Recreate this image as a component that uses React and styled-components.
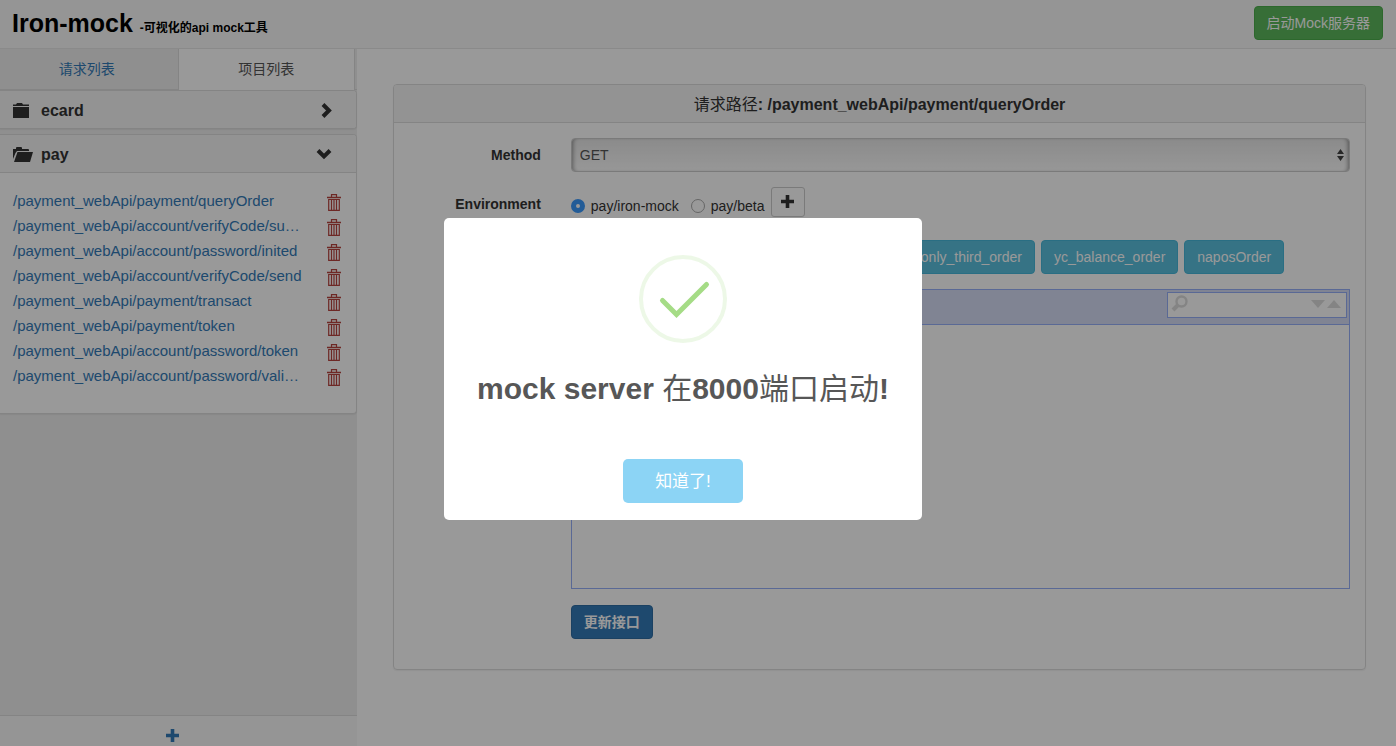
import React from "react";
import styled, { createGlobalStyle } from "styled-components";

const GlobalStyle = createGlobalStyle`
  *, *::before, *::after { box-sizing: border-box; }
  body {
    margin: 0;
    background: #fff;
    color: #333;
    font: 14px/20px "Liberation Sans", "Noto Sans CJK SC", sans-serif;
  }
  h1, h2, ul { margin: 0; padding: 0; font-weight: 700; }
  button, input, select { font: inherit; margin: 0; }
  a { color: #337ab7; text-decoration: none; }
  svg { display: block; }
`;

const Page = styled.div`
  display: flex;
  flex-direction: column;
  min-height: 100vh;
`;

const Header = styled.header`
  display: flex;
  align-items: center;
  justify-content: space-between;
  height: 49px;
  padding: 0 13px 2px 12px;
  background: #f8f8f8;
  border-bottom: 1px solid #e7e7e7;
`;

const Brand = styled.h1`
  padding-top: 4px;
  color: #000;
  font-size: 25px;
  line-height: 28px;
`;

const Tagline = styled.small`
  font-size: 12px;
`;

const colours = {
  success: ["#5cb85c", "#4cae4c"],
  info: ["#5bc0de", "#46b8da"],
  primary: ["#337ab7", "#2e6da4"],
};

const Button = styled.button`
  height: 34px;
  padding: 0 12px;
  border: 1px solid ${(p) => colours[p.$kind][1]};
  border-radius: 4px;
  background: ${(p) => colours[p.$kind][0]};
  color: #fff;
  font-weight: ${(p) => (p.$strong ? 700 : 400)};
  white-space: nowrap;
`;

const Columns = styled.div`
  display: flex;
  flex: 1;
`;

const Sidebar = styled.aside`
  display: flex;
  flex-direction: column;
  flex: 0 0 357px;
  background: #eee;
`;

const Tabs = styled.nav`
  display: grid;
  grid-template-columns: 1fr 1fr;
  height: 41px;
  padding-right: 2px;
  border-bottom: 1px solid #ddd;
`;

const Tab = styled.a`
  padding: ${(p) => (p.$active ? "10px 0 0" : "10px 4px 0 0")};
  margin-bottom: ${(p) => (p.$active ? "-1px" : "0")};
  text-align: center;
  color: ${(p) => (p.$active ? "#555" : "#337ab7")};
  background: ${(p) => (p.$active ? "#fff" : "#eee")};
  border: solid #ddd;
  border-width: ${(p) => (p.$active ? "0 1px" : "0")};
`;

const Project = styled.section`
  margin-bottom: 5px;
  background: #fff;
  border: solid #ddd;
  border-width: 1px 1px 1px 0;
  border-radius: 0 4px 4px 0;
  box-shadow: 0 1px 1px rgba(0, 0, 0, 0.05);
  overflow: hidden;
`;

const ProjectHeading = styled.h2`
  display: flex;
  align-items: center;
  height: ${(p) => (p.$open ? "38px" : "37px")};
  padding: 2px 24px 0 13px;
  background: #f5f5f5;
  font-size: 16px;
  line-height: 20px;
  border-bottom: ${(p) => (p.$open ? "1px solid #ddd" : "0")};
`;

const ProjectName = styled.span`
  flex: 1;
  padding-left: 8px;
`;

const RequestList = styled.ul`
  padding: 15px 12px 25px 13px;
  list-style: none;
`;

const Request = styled.li`
  display: flex;
  align-items: center;
  justify-content: space-between;
  height: 25px;
  font-size: 15px;
  font-weight: 400;
`;

const IconButton = styled.button`
  display: flex;
  padding: 4px 3px 0;
  border: 0;
  background: none;
  color: #b8433f;
`;

const AddProject = styled.button`
  display: flex;
  justify-content: center;
  height: 31px;
  margin-top: auto;
  padding: 13px 13px 0 0;
  border: 0;
  border-top: 1px solid #ddd;
  background: #f8f8f8;
  color: #337ab7;
`;

const Main = styled.main`
  flex: 1;
  min-width: 0;
  padding: 35px 30px 35px 36px;
`;

const Panel = styled.section`
  border: 1px solid #ddd;
  border-radius: 4px;
  box-shadow: 0 1px 1px rgba(0, 0, 0, 0.05);
`;

const PanelHeading = styled.h2`
  padding: 10px 15px 7px;
  border-bottom: 1px solid #ddd;
  border-radius: 3px 3px 0 0;
  background: #f5f5f5;
  font-size: 16px;
  line-height: 20px;
  text-align: center;
`;

const Plain = styled.span`
  font-weight: 400;
`;

const Form = styled.form`
  display: flex;
  flex-direction: column;
  gap: 15px;
  padding: 15px 0 30px;
`;

const Row = styled.div`
  display: grid;
  grid-template-columns: 2fr 10fr;
`;

const RowLabel = styled.label`
  padding: 7px 15px 0;
  font-weight: 700;
  text-align: right;
`;

const Field = styled.div`
  position: relative;
  grid-column: 2;
  min-width: 0;
  padding: 0 15px;
`;

const Select = styled.select`
  display: block;
  width: 100%;
  height: 34px;
  padding: 0 8px;
  appearance: none;
  border: 1px solid #ccc;
  border-radius: 4px;
  background: linear-gradient(#e8e8e8, #fcfcfc);
  box-shadow: inset 4px 0 4px -3px rgba(0, 0, 0, 0.4), inset -4px 0 4px -3px rgba(0, 0, 0, 0.4);
  color: #555;
`;

const SelectArrows = styled.svg`
  position: absolute;
  top: 11px;
  right: 21px;
  pointer-events: none;
`;

const Choices = styled.div`
  display: flex;
  align-items: flex-start;
  height: 38px;
`;

const Choice = styled.label`
  display: flex;
  align-items: center;
  gap: 6px;
  margin-right: ${(p) => (p.$last ? "7px" : "12px")};
  padding-top: 9px;
`;

const Radio = styled.input`
  width: 14px;
  height: 14px;
  appearance: none;
  border: 1px solid #aaa;
  border-radius: 50%;
  background: #fff;
  &:checked {
    border: 5px solid #3b99fc;
  }
`;

const AddButton = styled.button`
  display: flex;
  align-items: center;
  justify-content: center;
  width: 34px;
  height: 30px;
  padding: 0 2px 2px 0;
  border: 1px solid #ccc;
  border-radius: 3px;
  background: #fff;
  color: #333;
`;

const Presets = styled.div`
  display: flex;
  gap: 6px;
  padding-left: 337px;
`;

const Editor = styled.div`
  display: flex;
  flex-direction: column;
  height: 300px;
  margin-bottom: 1px;
  border: 1px solid #97b0f8;
  background: #fff;
`;

const EditorMenu = styled.div`
  display: flex;
  justify-content: flex-end;
  height: 35px;
  padding: 2px;
  border-bottom: 1px solid #97b0f8;
  background: #d5ddf6;
`;

const Search = styled.label`
  display: flex;
  width: 180px;
  height: 26px;
  padding: 2px 5px 4px 3px;
  border: 1px solid #97b0f8;
  background: #fff;
  color: #ddd;
`;

const SearchInput = styled.input`
  flex: 1;
  min-width: 0;
  border: 0;
  padding: 0 4px;
  background: none;
  outline: 0;
`;

const Backdrop = styled.div`
  position: fixed;
  inset: 0;
  display: flex;
  align-items: center;
  justify-content: center;
  padding: 0 30px 8px 0;
  background: rgba(0, 0, 0, 0.4);
`;

const Dialog = styled.div`
  display: flex;
  flex-direction: column;
  align-items: center;
  width: 478px;
  padding: 37px 17px 17px;
  border-radius: 5px;
  background: #fff;
`;

const DialogTitle = styled.h2`
  margin: 25px 0 50px;
  color: #575757;
  font-size: 30px;
  line-height: 41px;
  white-space: nowrap;
`;

const DialogButton = styled.button`
  height: 44px;
  padding: 2px 32px 0;
  border: 0;
  border-radius: 5px;
  background: #8cd4f5;
  color: #fff;
  font-size: 17px;
`;

const FolderIcon = ({ open }) => (
  <svg width="20" height="16" viewBox="0 0 20 16" fill="currentColor" aria-hidden="true">
    {open ? (
      <>
        <path d="M0 12V2h3V1q0-1 1-1h4q1 0 1 1v1h6q1 0 1 1v1H4L2.500 6z" />
        <path d="M1 15 4.500 5H20l-3 10z" />
      </>
    ) : (
      <>
        <path d="M0 3V1.500h3L4 0h5l1 1.500h6V3z" />
        <path d="M0 4h16v11H0z" />
      </>
    )}
  </svg>
);

const ChevronIcon = ({ down }) => (
  <svg width={down ? 16 : 12} height="16" viewBox={down ? "0 0 16 16" : "0 0 12 16"} fill="none" stroke="currentColor" strokeWidth="4" aria-hidden="true">
    <path d={down ? "M2 3.500 8 9.500 14 3.500" : "M3 1.500 9 7.500 3 13.500"} />
  </svg>
);

const TrashIcon = () => (
  <svg width="14" height="17" viewBox="0 0 14 17" fill="none" stroke="currentColor" aria-hidden="true">
    <path d="M0 3.500h14" strokeWidth="1.500" />
    <path d="M4.500 3V.700h5V3M1.700 5v11.300h10.600V5M1.700 5.500h10.600M4.500 6v10M7 6v10M9.500 6v10" strokeWidth="1.200" />
  </svg>
);

const PlusIcon = () => (
  <svg width="13" height="13" viewBox="0 0 13 13" fill="currentColor" aria-hidden="true">
    <path d="M4.700 0h3.600v4.700H13v3.600H8.300V13H4.700V8.300H0V4.700h4.700z" />
  </svg>
);

const requests = [
  "/payment_webApi/payment/queryOrder",
  "/payment_webApi/account/verifyCode/su…",
  "/payment_webApi/account/password/inited",
  "/payment_webApi/account/verifyCode/send",
  "/payment_webApi/payment/transact",
  "/payment_webApi/payment/token",
  "/payment_webApi/account/password/token",
  "/payment_webApi/account/password/vali…",
];

const presets = ["only_third_order", "yc_balance_order", "naposOrder"];

export default function App() {
  return (
    <Page>
      <GlobalStyle />
      <Header>
        <Brand>
          Iron-mock <Tagline>-可视化的api mock工具</Tagline>
        </Brand>
        <Button $kind="success">启动Mock服务器</Button>
      </Header>
      <Columns>
        <Sidebar>
          <Tabs>
            <Tab href="#requests">请求列表</Tab>
            <Tab href="#projects" $active>项目列表</Tab>
          </Tabs>
          <Project>
            <ProjectHeading>
              <FolderIcon />
              <ProjectName>ecard</ProjectName>
              <ChevronIcon />
            </ProjectHeading>
          </Project>
          <Project>
            <ProjectHeading $open>
              <FolderIcon open />
              <ProjectName>pay</ProjectName>
              <ChevronIcon down />
            </ProjectHeading>
            <RequestList>
              {requests.map((path) => (
                <Request key={path}>
                  <a href="#request">{path}</a>
                  <IconButton aria-label="Delete">
                    <TrashIcon />
                  </IconButton>
                </Request>
              ))}
            </RequestList>
          </Project>
          <AddProject aria-label="Add project">
            <PlusIcon />
          </AddProject>
        </Sidebar>
        <Main>
          <Panel>
            <PanelHeading>
              <Plain>请求路径</Plain>: /payment_webApi/payment/queryOrder
            </PanelHeading>
            <Form onSubmit={(e) => e.preventDefault()}>
              <Row>
                <RowLabel htmlFor="method">Method</RowLabel>
                <Field>
                  <Select id="method" defaultValue="GET">
                    <option>GET</option>
                  </Select>
                  <SelectArrows width="7" height="12" viewBox="0 0 7 12" fill="#444" aria-hidden="true">
                    <path d="M0 5 3.500 0 7 5zM0 7h7l-3.500 5z" />
                  </SelectArrows>
                </Field>
              </Row>
              <Row>
                <RowLabel as="span" id="environment">Environment</RowLabel>
                <Field>
                  <Choices role="radiogroup" aria-labelledby="environment">
                    <Choice>
                      <Radio type="radio" name="environment" defaultChecked />
                      pay/iron-mock
                    </Choice>
                    <Choice $last>
                      <Radio type="radio" name="environment" />
                      pay/beta
                    </Choice>
                    <AddButton type="button" aria-label="Add environment">
                      <PlusIcon />
                    </AddButton>
                  </Choices>
                </Field>
              </Row>
              <Row>
                <Field>
                  <Presets>
                    {presets.map((name) => (
                      <Button key={name} type="button" $kind="info">{name}</Button>
                    ))}
                  </Presets>
                </Field>
              </Row>
              <Row>
                <Field>
                  <Editor>
                    <EditorMenu>
                      <Search>
                        <svg width="18" height="18" viewBox="0 0 18 18" fill="none" stroke="currentColor" aria-hidden="true">
                          <circle cx="10.500" cy="6.500" r="5" strokeWidth="2.400" />
                          <path d="m7 10-5 5" strokeWidth="4" />
                        </svg>
                        <SearchInput aria-label="Search" />
                        <svg width="30" height="18" viewBox="0 0 30 18" fill="currentColor" aria-hidden="true">
                          <path d="M0 5h14l-7 8zM16 13h14l-7-8z" />
                        </svg>
                      </Search>
                    </EditorMenu>
                  </Editor>
                </Field>
              </Row>
              <Row>
                <Field>
                  <Button $kind="primary" $strong>更新接口</Button>
                </Field>
              </Row>
            </Form>
          </Panel>
        </Main>
      </Columns>
      <Backdrop>
        <Dialog role="dialog" aria-modal="true" aria-labelledby="dialog-title">
          <svg width="88" height="88" viewBox="0 0 88 88" fill="none" stroke="#a5dc86" aria-hidden="true">
            <circle cx="44" cy="44" r="42" strokeWidth="4" strokeOpacity="0.2" />
            <path d="M23.500 45.500 37.500 59.500 67.500 29.500" strokeWidth="5" strokeLinecap="round" />
          </svg>
          <DialogTitle id="dialog-title">
            mock server <Plain>在</Plain>8000<Plain>端口启动</Plain>!
          </DialogTitle>
          <DialogButton>知道了!</DialogButton>
        </Dialog>
      </Backdrop>
    </Page>
  );
}
